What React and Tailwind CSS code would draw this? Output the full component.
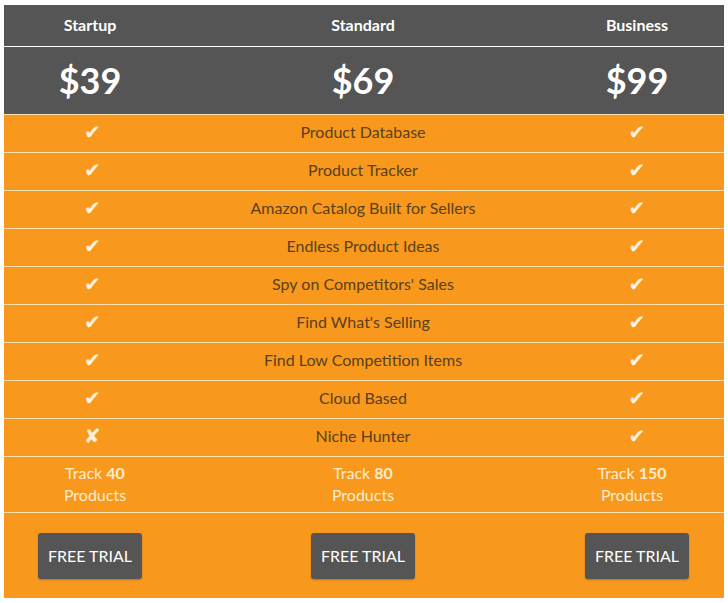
import React from "react";

const plans = [
  { name: "Startup", price: "$39", track: "40", trackPad: "pl-[10px]" },
  { name: "Standard", price: "$69", track: "80", trackPad: "" },
  { name: "Business", price: "$99", track: "150", trackPad: "pr-[10px]" },
];

const features = [
  ["Product Database", true, true],
  ["Product Tracker", true, true],
  ["Amazon Catalog Built for Sellers", true, true],
  ["Endless Product Ideas", true, true],
  ["Spy on Competitors' Sales", true, true],
  ["Find What's Selling", true, true],
  ["Find Low Competition Items", true, true],
  ["Cloud Based", true, true],
  ["Niche Hunter", false, true],
];

const cols = "grid grid-cols-[172px_374px_174px]";

const Mark = ({ ok }) => (
  <span className="text-[20px] leading-none text-[#fdf1dc]" style={{ fontFamily: "'DejaVu Sans', sans-serif" }}>
    {ok ? "✔" : "✘"}
  </span>
);

export default function App() {
  return (
    <div className="bg-white min-h-[603px] pt-[5px] pl-[4px]" style={{ fontFamily: "Lato, 'Open Sans', sans-serif" }}>
      <div className="w-[720px]">
        <div className={`${cols} h-[42px] bg-[#555555] border-b border-white text-white font-bold text-[16px]`}>
          {plans.map((p) => (
            <div key={p.name} className="flex items-center justify-center pb-[1px]">
              {p.name}
            </div>
          ))}
        </div>
        <div className={`${cols} h-[68px] bg-[#555555] border-b border-[#fbe0b0] text-white font-bold text-[36px]`}>
          {plans.map((p) => (
            <div key={p.name} className="flex items-center justify-center pb-[2px]">
              {p.price}
            </div>
          ))}
        </div>
        <div className="bg-[#f8991d]">
          {features.map(([label, a, b]) => (
            <div key={label} className={`${cols} h-[38px] border-b border-[#fbe0b0]`}>
              <div className="flex items-center justify-center pb-[4px] pl-[5px]">
                <Mark ok={a} />
              </div>
              <div className="flex items-center justify-center pb-[4px] text-[16px] text-[#5a401c]">{label}</div>
              <div className="flex items-center justify-center pb-[4px]">
                <Mark ok={b} />
              </div>
            </div>
          ))}
          <div className={`${cols} h-[56px] border-b border-[#fbe0b0] text-[16px] leading-[22px] text-[#fdeccc]`}>
            {plans.map((p) => (
              <div key={p.name} className={`flex flex-col items-center justify-center pb-[2px] ${p.trackPad}`}>
                <span>
                  Track <b className="font-bold">{p.track}</b>
                </span>
                <span>Products</span>
              </div>
            ))}
          </div>
          <div className={`${cols} h-[85px]`}>
            {plans.map((p) => (
              <div key={p.name} className="flex items-center justify-center">
                <button className="w-[104px] h-[46px] rounded-[3px] bg-[#555555] text-white text-[16px] shadow-[0_1px_2px_rgba(0,0,0,0.25)]">
                  FREE TRIAL
                </button>
              </div>
            ))}
          </div>
        </div>
      </div>
    </div>
  );
}
